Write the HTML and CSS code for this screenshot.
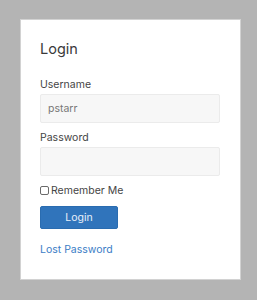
FILE: index.html
```html
<!DOCTYPE html>
<html>
  <head>
    <title>Login</title>
    <link rel="stylesheet" href="styles.css">
  </head>
  <body>
    <div class="login-box">
      <h2 class="login-title">Login</h2>
      <form class="login-form">
        <label class="field-label" for="username">Username</label>
        <input class="field-input" type="text" id="username" value="pstarr" />
        <label class="field-label" for="password">Password</label>
        <input class="field-input" type="password" id="password" />
        <label class="remember">
          <input type="checkbox" class="remember-box" />
          <span>Remember Me</span>
        </label>
        <button type="button" class="login-btn">Login</button>
        <a class="lost-link" href="#">Lost Password</a>
      </form>
    </div>
  </body>
</html>
```

FILE: styles.css
```css
body {
  font-family: Inter, "Liberation Sans", sans-serif;
  margin: 0;
  padding: 19px 0 0 20px;
  background: #b4b4b4;
}

.login-box {
  width: 221px;
  height: 261px;
  box-sizing: border-box;
  padding: 20px 19px;
  background: white;
  border: 1px solid #d2d2d2;
}

.login-title {
  margin: 0;
  font-size: 14.5px;
  font-weight: 400;
  color: #3a3a3a;
  line-height: 17px;
}

.login-form {
  display: flex;
  flex-direction: column;
  align-items: flex-start;
  margin-top: 21px;
}

.field-label {
  font-size: 10.5px;
  color: #454545;
  line-height: 13px;
  margin-bottom: 3px;
}

.field-input {
  width: 180px;
  height: 29px;
  box-sizing: border-box;
  border: 1px solid #ebebeb;
  border-radius: 2px;
  background: #f7f7f7;
  padding: 0 7px;
  font-family: inherit;
  font-size: 10.5px;
  color: #777;
  margin: 0 0 8px;
}

.remember {
  display: flex;
  align-items: center;
  font-size: 10.5px;
  line-height: 13px;
  color: #454545;
}

.remember-box {
  appearance: none;
  width: 9px;
  height: 9px;
  margin: 0 2px 0 0;
  border: 1px solid #6a6a6a;
  border-radius: 2px;
  background: white;
}

.login-btn {
  margin-top: 9px;
  width: 78px;
  height: 23px;
  border: 1px solid #2a6cb0;
  border-radius: 2px;
  background: #3074bb;
  color: #e8f0fa;
  font-family: inherit;
  font-size: 10.5px;
}

.lost-link {
  margin-top: 14px;
  font-size: 10.5px;
  line-height: 13px;
  color: #3b7dc6;
  text-decoration: none;
}
```
